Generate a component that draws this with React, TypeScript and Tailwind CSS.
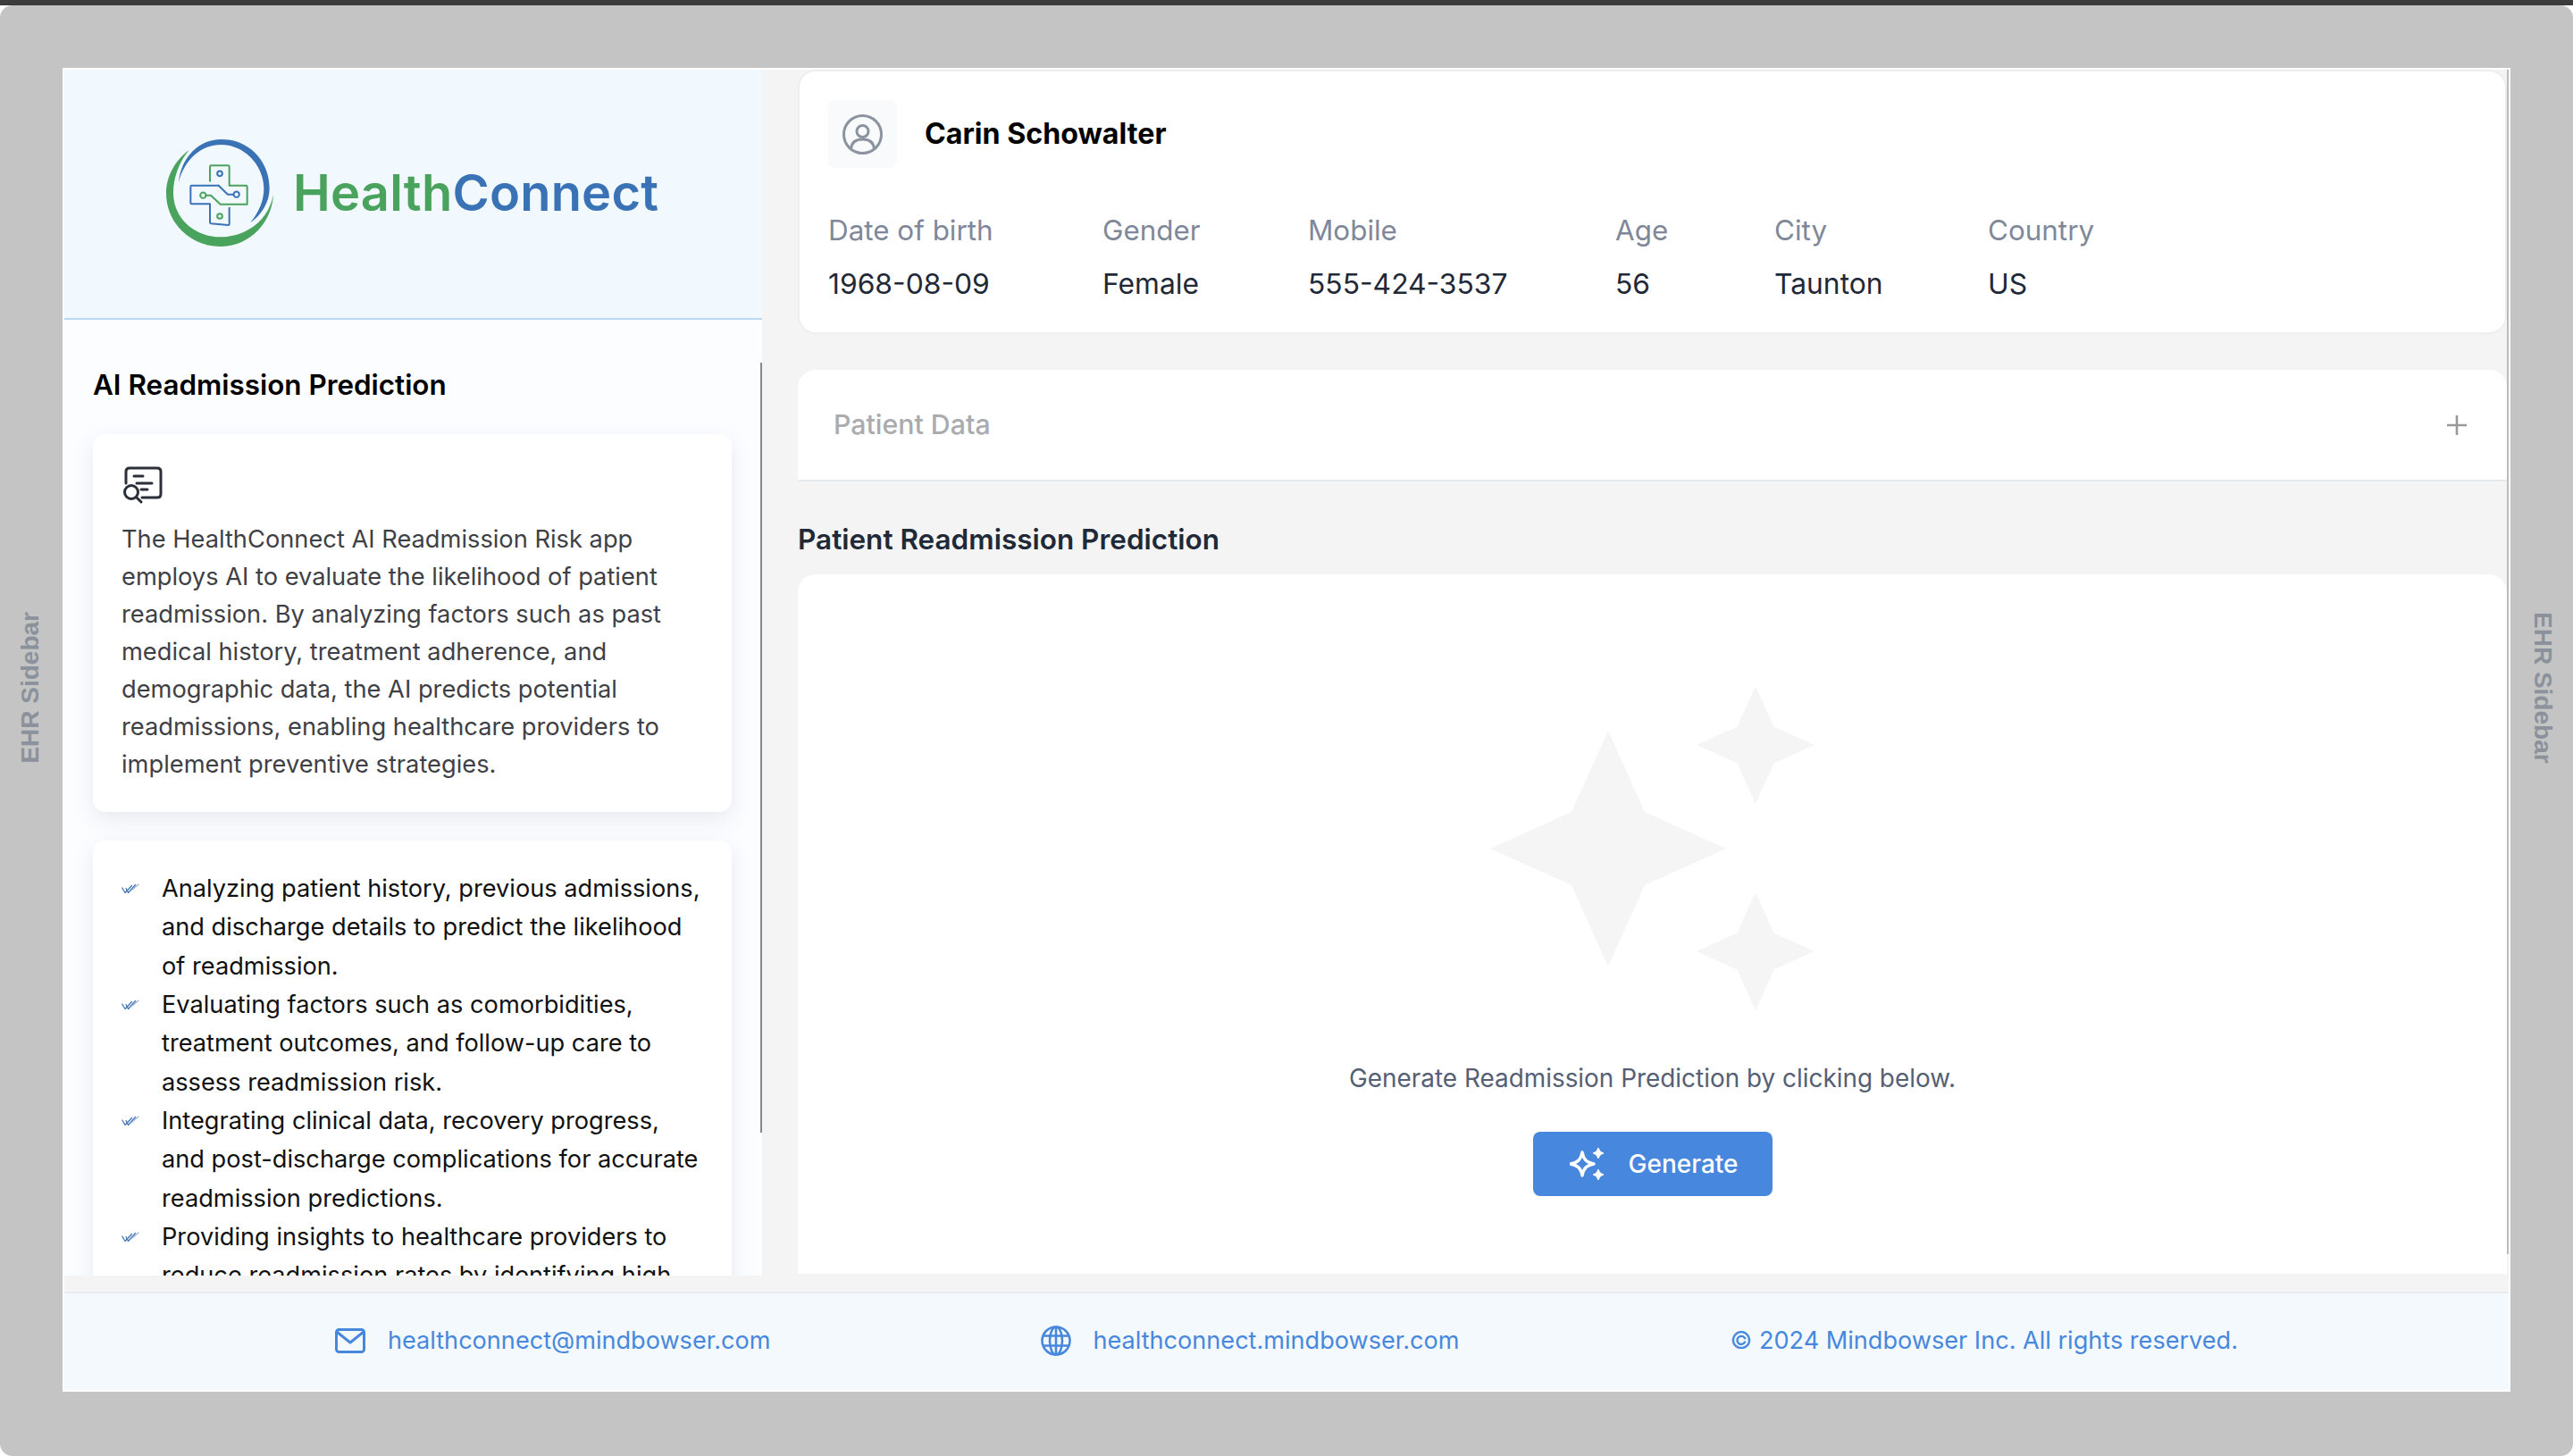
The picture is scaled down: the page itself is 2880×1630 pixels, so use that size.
const FONT = 'font-["Inter",sans-serif]'

const PATIENT_FIELDS = [
  { label: 'Date of birth', value: '1968-08-09', width: 'w-[307px]' },
  { label: 'Gender', value: 'Female', width: 'w-[230px]' },
  { label: 'Mobile', value: '555-424-3537', width: 'w-[344px]' },
  { label: 'Age', value: '56', width: 'w-[178px]' },
  { label: 'City', value: 'Taunton', width: 'w-[239px]' },
  { label: 'Country', value: 'US', width: 'w-[200px]' },
]

const BULLETS = [
  'Analyzing patient history, previous admissions, and discharge details to predict the likelihood of readmission.',
  'Evaluating factors such as comorbidities, treatment outcomes, and follow-up care to assess readmission risk.',
  'Integrating clinical data, recovery progress, and post-discharge complications for accurate readmission predictions.',
  'Providing insights to healthcare providers to reduce readmission rates by identifying high risk patients early.',
]

function LogoMark() {
  return (
    <svg width="120" height="120" viewBox="0 0 360 360" fill="none" className="shrink-0">
      <path d="M42,145 C50,60 110,0 185,0 C280,0 347,75 347,165 C347,210 320,255 282,280 C312,245 328,205 328,165 C328,90 265,18 185,18 C115,18 60,70 42,145 Z" fill="#3a72b6" />
      <path d="M77,35 C30,70 0,125 0,180 C0,280 80,360 182,360 C280,360 355,280 360,185 C345,270 270,328 182,328 C95,328 24,265 24,180 C24,125 45,75 77,35 Z" fill="#4aa35c" />
      <g strokeWidth="6" strokeLinecap="round" strokeLinejoin="round">
        <path d="M147,140 V92 Q147,88 151,88 H208 Q212,88 212,92 V155 H268 Q272,155 272,159 V218 H182 L150,188 H134" stroke="#4aa35c" />
        <path d="M176,155 H86 Q82,155 82,159 V213 Q82,217 86,217 H147 V278 Q147,282 151,283 L208,288 Q212,288 212,284 V230" stroke="#3a72b6" />
        <path d="M176,155 L207,185 H226" stroke="#3a72b6" />
        <circle cx="180" cy="115" r="8.5" stroke="#3a72b6" />
        <circle cx="180" cy="258" r="8.5" stroke="#4aa35c" />
        <circle cx="124" cy="188" r="9.5" stroke="#4aa35c" />
        <circle cx="236" cy="185" r="9.5" stroke="#3a72b6" />
      </g>
    </svg>
  )
}

function DocSearchIcon() {
  return (
    <svg width="44" height="42" viewBox="0 0 44 42" fill="none" stroke="#2b2f38" strokeWidth="3" strokeLinecap="round" strokeLinejoin="round">
      <path d="M3,19 V6 Q3,2 7,2 H38 Q42,2 42,6 V31 Q42,35 38,35 H21" />
      <path d="M12,11 H22 M15,19 H32 M20,26 H27" />
      <circle cx="9" cy="29" r="7.5" />
      <path d="M14.5,34.5 L20,40" />
    </svg>
  )
}

function DoubleCheck() {
  return (
    <svg width="20" height="12" viewBox="0 0 20 12" fill="none" strokeLinecap="round" strokeLinejoin="round" className="shrink-0">
      <path d="M0.8,5 L4,10.5 L11.5,2.5" stroke="#3a72b6" strokeWidth="1.2" />
      <path d="M5,5.5 L7.5,10.5 L15.5,1.5" stroke="#3a72b6" strokeWidth="1.2" />
      <path d="M10,8.5 L19,1" stroke="#8fb0d9" strokeWidth="1.1" />
    </svg>
  )
}

function UserCircle() {
  return (
    <svg width="45" height="45" viewBox="0 0 45 45" fill="none" stroke="#8a939e" strokeWidth="3">
      <circle cx="22.5" cy="22.5" r="21" />
      <circle cx="22.5" cy="19" r="6.5" />
      <path d="M9.5,39 C10,31 15,28 22.5,28 C30,28 35,31 35.5,39" />
    </svg>
  )
}

function Sparkles() {
  return (
    <svg width="363" height="363" viewBox="0 0 363 363" fill="#f5f5f5">
      <polygon points="132,50 173,141 264,182 173,223 132,314 91,223 0,182 91,141" />
      <polygon points="297,0 317.5,45.5 363,66 317.5,86.5 297,132 276.5,86.5 231,66 276.5,45.5" />
      <polygon points="297,231 317.5,276.5 363,297 317.5,317.5 297,363 276.5,317.5 231,297 276.5,276.5" />
    </svg>
  )
}

function GenerateIcon() {
  return (
    <svg width="38" height="36" viewBox="0 0 38 36" fill="none" stroke="white" strokeLinejoin="round">
      <path d="M14,5 C15.5,13 19,16.5 27,18 C19,19.5 15.5,23 14,31 C12.5,23 9,19.5 1,18 C9,16.5 12.5,13 14,5 Z" strokeWidth="3.4" />
      <path d="M32,1 C32.6,4 34,5.4 37,6 C34,6.6 32.6,8 32,11 C31.4,8 30,6.6 27,6 C30,5.4 31.4,4 32,1 Z" fill="white" strokeWidth="2" />
      <path d="M32,25 C32.6,28 34,29.4 37,30 C34,30.6 32.6,32 32,35 C31.4,32 30,30.6 27,30 C30,29.4 31.4,28 32,25 Z" fill="white" strokeWidth="2" />
    </svg>
  )
}

function MailIcon() {
  return (
    <svg width="34" height="28" viewBox="0 0 34 28" fill="none" stroke="#4788dd" strokeWidth="3" strokeLinejoin="round" className="shrink-0">
      <rect x="1.5" y="1.5" width="31" height="25" rx="3" />
      <path d="M2,4 L17,16 L32,4" />
    </svg>
  )
}

function GlobeIcon() {
  return (
    <svg width="34" height="34" viewBox="0 0 34 34" fill="none" stroke="#4788dd" strokeWidth="2.6" className="shrink-0">
      <circle cx="17" cy="17" r="15.5" />
      <ellipse cx="17" cy="17" rx="7" ry="15.5" />
      <path d="M17,1.5 V32.5 M3,11.5 H31 M3,22.5 H31" />
    </svg>
  )
}

export default function App() {
  return (
    <div className={`${FONT} h-[1630px] w-[2880px] overflow-hidden bg-white`}>
      <div className="h-[6px] bg-[#3c3c3c]" />
      <div className="flex h-[1624px] rounded-[14px] bg-[#c4c4c4]">

        {/* left gutter */}
        <div className="flex h-[1624px] w-[70px] shrink-0 items-center justify-center pb-[96px] pr-[2px]">
          <span className='rotate-180 text-[28px] font-semibold text-[#8b929b] [writing-mode:vertical-rl] font-["Liberation_Sans",sans-serif]'>EHR Sidebar</span>
        </div>

        <div className="mt-[70px] flex h-[1482px] w-[2740px] shrink-0 flex-col border-2 border-white bg-[#f4f4f4]">
          <div className="relative flex h-[1368px] shrink-0">

            {/* ── sidebar ── */}
            <div className="relative w-[781px] shrink-0">
              <div className="flex h-[280px] items-center gap-[22px] border-b-2 border-[#bcd9f4] bg-[#f1f8fe] pb-[2px] pl-[114px]">
                <LogoMark />
                <span className="text-[56px] font-semibold leading-none tracking-[0.2px]">
                  <span className="text-[#4aa35c]">Health</span>
                  <span className="text-[#3a72b6]">Connect</span>
                </span>
              </div>
              <div className="h-[1070px] overflow-hidden bg-[#fcfdff] pl-[32px] pr-[34px]">
                <h2 className="pt-[52px] text-[31.4px] font-semibold leading-[42px] text-black">AI Readmission Prediction</h2>
                <div className="mt-[34px] h-[423px] rounded-[14px] bg-white px-[32px] pt-[36px] shadow-[0_8px_24px_rgba(100,116,139,0.14)]">
                  <div className="ml-[2px]"><DocSearchIcon /></div>
                  <p className="mt-[19px] text-[27.25px] leading-[42px] text-[#3f3f46]">
                    The HealthConnect AI Readmission Risk app employs AI to evaluate the likelihood of patient readmission. By analyzing factors such as past medical history, treatment adherence, and demographic data, the AI predicts potential readmissions, enabling healthcare providers to implement preventive strategies.
                  </p>
                </div>
                <ul className="mt-[32px] rounded-[14px] bg-white pl-[32px] pr-[28px] pt-[32px] shadow-[0_8px_24px_rgba(100,116,139,0.14)]">
                  {BULLETS.map(text => (
                    <li key={text} className="flex gap-[25px] text-[27.2px] leading-[43.33px] text-[#111111]">
                      <span className="pt-[16px]"><DoubleCheck /></span>
                      <span>{text}</span>
                    </li>
                  ))}
                </ul>
              </div>
              <div className="absolute right-0 top-[328px] h-[862px] w-[2px] bg-[#888888]" />
            </div>

            {/* ── main content ── */}
            <div className="relative flex min-w-0 flex-1 flex-col pl-[40px] pr-[2px]">
              <div className="h-[296px] shrink-0 rounded-[20px] border-2 border-[#eeeeee] bg-white pl-[32px] pt-[32px]">
                <div className="flex items-center gap-[31px]">
                  <div className="flex h-[76px] w-[77px] items-center justify-center rounded-[8px] bg-[#f9fafb]">
                    <UserCircle />
                  </div>
                  <span className="text-[32.2px] font-bold leading-none text-black">Carin Schowalter</span>
                </div>
                <div className="mt-[50px] flex">
                  {PATIENT_FIELDS.map(f => (
                    <div key={f.label} className={f.width}>
                      <p className="text-[31.4px] leading-[40px] text-[#7f8899]">{f.label}</p>
                      <p className="mt-[20px] text-[31.8px] leading-[40px] text-[#1f2937]">{f.value}</p>
                    </div>
                  ))}
                </div>
              </div>

              <div className="mt-[40px] flex h-[125px] shrink-0 items-center justify-between rounded-t-[20px] border-b-2 border-[#e5e8ec] bg-white pl-[40px] pr-[44px]">
                <span className="text-[30.3px] font-medium text-[#a9abae]">Patient Data</span>
                <svg width="24" height="24" viewBox="0 0 24 24" fill="none" stroke="#999999" strokeWidth="2.6"><path d="M12,1 V23 M1,12 H23" /></svg>
              </div>

              <h2 className="mt-[44px] text-[31.5px] font-semibold leading-[42px] text-[#1f2937]">Patient Readmission Prediction</h2>

              <div className="mt-[18px] flex h-[783px] shrink-0 flex-col items-center rounded-t-[20px] bg-white pt-[125px]">
                <Sparkles />
                <p className="mt-[56px] text-[27.9px] leading-[40px] text-[#566074]">Generate Readmission Prediction by clicking below.</p>
                <button className="mt-[40px] flex h-[72px] w-[268px] items-center gap-[28px] rounded-[8px] bg-[#4787de] pl-[41px] text-[28px] font-medium text-white">
                  <GenerateIcon />
                  Generate
                </button>
              </div>

              <div className="absolute right-0 top-0 h-[1326px] w-[2px] bg-[#bbbbbb]" />
            </div>
          </div>

          {/* ── footer ── */}
          <div className="flex h-[110px] shrink-0 items-center justify-evenly border-t-2 border-[#e8eaed] bg-[#f4f9fe] pb-[2px] text-[27.1px] text-[#4788dd]">
            <div className="flex items-center gap-[25px]"><MailIcon /><span>healthconnect@mindbowser.com</span></div>
            <div className="flex items-center gap-[24px]"><GlobeIcon /><span>healthconnect.mindbowser.com</span></div>
            <span>© 2024 Mindbowser Inc. All rights reserved.</span>
          </div>
        </div>

        {/* right gutter */}
        <div className="flex h-[1624px] w-[70px] shrink-0 items-center justify-center pb-[96px] pl-[2px]">
          <span className='text-[28px] font-semibold text-[#8b929b] [writing-mode:vertical-rl] font-["Liberation_Sans",sans-serif]'>EHR Sidebar</span>
        </div>
      </div>
    </div>
  )
}
